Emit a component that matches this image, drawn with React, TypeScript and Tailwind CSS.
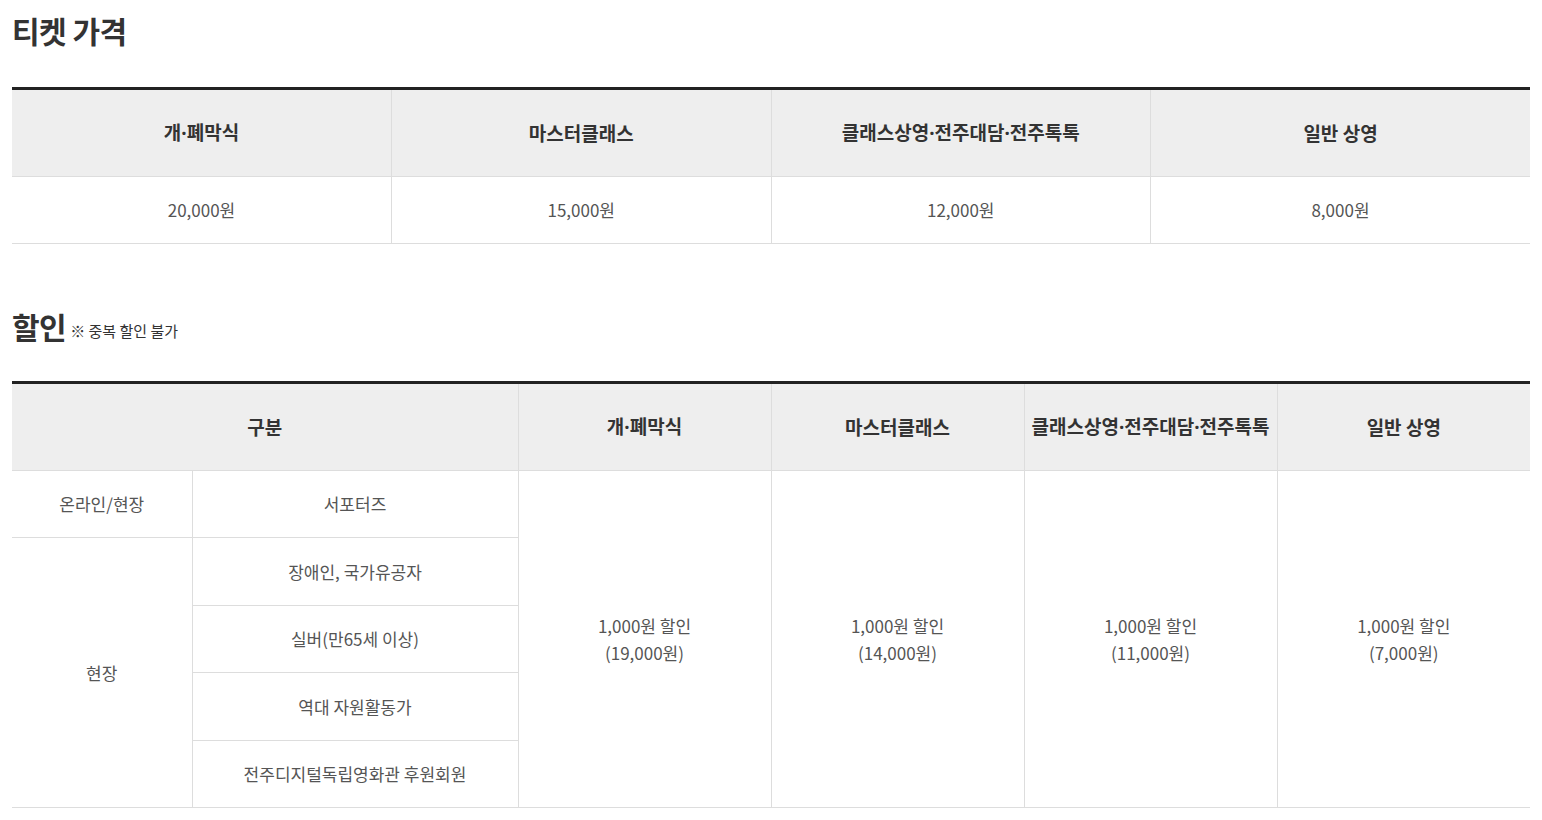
import React from 'react';

const font = { fontFamily: '"Noto Sans CJK KR", "Noto Sans", sans-serif' };

const Dot = () => <span style={{ fontFamily: '"Noto Sans", sans-serif' }}>·</span>;

const priceCols: React.ReactNode[] = [
    <>개<Dot />폐막식</>,
    '마스터클래스',
    <>클래스상영<Dot />전주대담<Dot />전주톡톡</>,
    '일반 상영',
];
const prices = ['20,000원', '15,000원', '12,000원', '8,000원'];
const discounts = ['19,000원', '14,000원', '11,000원', '7,000원'];

const th = 'h-[88px] bg-[#eeeeee] border border-[#dddddd] border-t-0 text-[19px] font-bold text-[#333333] text-center align-middle';
const td = 'border border-[#dddddd] text-[17px] text-[#555555] text-center align-middle';

const App: React.FC = () => {
    return (
        <div className="px-3 pt-[8px] pb-10 bg-white min-h-screen" style={font}>
            <h2 className="text-[30px] font-bold text-[#333333] leading-[44px] tracking-[-0.5px]">티켓 가격</h2>
            <table className="w-full mt-[35px] border-collapse table-fixed border-t-[3px] border-t-[#222222]">
                <thead>
                    <tr>
                        {priceCols.map((c, i) => (
                            <th key={i} className={`${th} ${i === 0 ? 'border-l-0' : ''} ${i === 3 ? 'border-r-0' : ''}`}>{c}</th>
                        ))}
                    </tr>
                </thead>
                <tbody>
                    <tr>
                        {prices.map((p, i) => (
                            <td key={p} className={`${td} h-[67px] ${i === 0 ? 'border-l-0' : ''} ${i === 3 ? 'border-r-0' : ''}`}>{p}</td>
                        ))}
                    </tr>
                </tbody>
            </table>

            <div className="mt-[60px] flex items-end gap-1">
                <h2 className="text-[30px] font-bold text-[#333333] leading-[44px] tracking-[-0.5px]">할인</h2>
                <span className="text-[15px] text-[#333333] mb-[6px]">※ 중복 할인 불가</span>
            </div>
            <table className="w-full mt-[33px] border-collapse table-fixed border-t-[3px] border-t-[#222222]">
                <colgroup>
                    <col className="w-[180px]" />
                    <col className="w-[326px]" />
                    <col />
                    <col />
                    <col />
                    <col />
                </colgroup>
                <thead>
                    <tr>
                        <th colSpan={2} className={`${th} border-l-0`}>구분</th>
                        {priceCols.map((c, i) => (
                            <th key={i} className={`${th} ${i === 3 ? 'border-r-0' : ''}`}>{c}</th>
                        ))}
                    </tr>
                </thead>
                <tbody>
                    <tr>
                        <td className={`${td} h-[67.4px] border-l-0`}>온라인/현장</td>
                        <td className={`${td} h-[67.4px]`}>서포터즈</td>
                        {discounts.map((d, i) => (
                            <td key={d} rowSpan={5} className={`${td} leading-[27px] ${i === 3 ? 'border-r-0' : ''}`}>
                                1,000원 할인<br />({d})
                            </td>
                        ))}
                    </tr>
                    <tr>
                        <td rowSpan={4} className={`${td} border-l-0`}>현장</td>
                        <td className={`${td} h-[67.4px]`}>장애인, 국가유공자</td>
                    </tr>
                    <tr>
                        <td className={`${td} h-[67.4px]`}>실버(만65세 이상)</td>
                    </tr>
                    <tr>
                        <td className={`${td} h-[67.4px]`}>역대 자원활동가</td>
                    </tr>
                    <tr>
                        <td className={`${td} h-[67.4px]`}>전주디지털독립영화관 후원회원</td>
                    </tr>
                </tbody>
            </table>
        </div>
    );
};

export default App;
